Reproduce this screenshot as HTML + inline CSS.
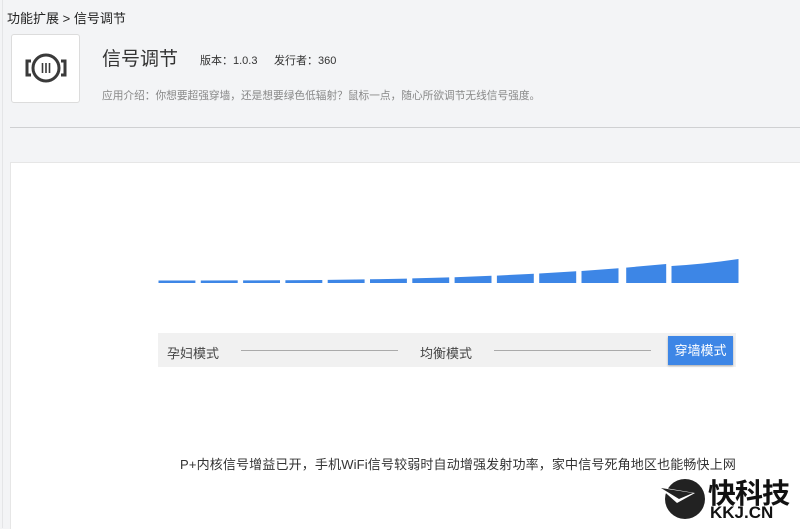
<!DOCTYPE html>
<html><head><meta charset="utf-8"><style>
body{margin:0;width:800px;height:528px;overflow:hidden;background:#f3f4f6;font-family:"Liberation Sans","Noto Sans CJK SC",sans-serif;position:relative;color:#333}
.a{position:absolute;white-space:nowrap}
</style></head><body>
<div class="a" style="left:2px;top:0;width:1px;height:528px;background:#e4e5e7"></div>
<div class="a" style="left:7px;top:8px;font-size:13px;color:#222">功能扩展 &gt; 信号调节</div>
<div class="a" style="left:11px;top:34px;width:67px;height:67px;background:#fff;border:1px solid #dcdcdc;border-radius:3px"></div>
<svg class="a" style="left:24px;top:50px" width="44" height="36" viewBox="0 0 44 36">
<circle cx="22" cy="18" r="13" fill="none" stroke="#3a3a3a" stroke-width="3"/>
<path d="M7 11H3v14h4M37 11h4v14h-4" fill="none" stroke="#3a3a3a" stroke-width="3"/>
<path d="M18.5 13v10M22 13v10M25.5 13v10" stroke="#3a3a3a" stroke-width="1.6"/>
</svg>
<div class="a" style="left:102px;top:44px;font-size:19px;color:#333">信号调节</div>
<div class="a" style="left:200px;top:52px;font-size:11px;color:#333">版本：1.0.3</div>
<div class="a" style="left:274px;top:52px;font-size:11px;color:#333">发行者：360</div>
<div class="a" style="left:102px;top:88px;font-size:10.7px;color:#888">应用介绍：你想要超强穿墙，还是想要绿色低辐射？鼠标一点，随心所欲调节无线信号强度。</div>
<div class="a" style="left:10px;top:127px;width:790px;height:1px;background:#cfd0d2"></div>
<div class="a" style="left:10px;top:162px;width:790px;height:366px;background:#fff;border-top:1px solid #e6e6e6;border-left:1px solid #e6e6e6"></div>
<svg class="a" style="left:0;top:0" width="800" height="300">
<g fill="#3d86e6">
<polygon points="158.5,283 195.4,283 195.4,280.5 158.5,280.5"/>
<polygon points="200.8,283 237.7,283 237.7,280.4 200.8,280.5"/>
<polygon points="243.1,283 280,283 280,280.3 243.1,280.4"/>
<polygon points="285.4,283 322.3,283 322.3,280 285.4,280.2"/>
<polygon points="327.7,283 364.6,283 364.6,279.4 327.7,279.9"/>
<polygon points="370,283 406.9,283 406.9,278.6 370,279.3"/>
<polygon points="412.3,283 449.2,283 449.2,277.4 412.3,278.4"/>
<polygon points="454.6,283 491.5,283 491.5,275.8 454.6,277.2"/>
<polygon points="496.9,283 533.8,283 533.8,273.8 496.9,275.6"/>
<polygon points="539.2,283 576.2,283 576.2,271.3 539.2,273.5"/>
<polygon points="581.5,283 618.5,283 618.5,268.2 581.5,271"/>
<polygon points="626.2,283 666.2,283 666.2,264 626.2,267.6"/>
<path d="M671.5 283H738.5V259Q705 264 671.5 266Z"/>
</g></svg>
<div class="a" style="left:158px;top:333px;width:578px;height:34px;background:#f1f1f1"></div>
<div class="a" style="left:167px;top:343px;font-size:13px;color:#444">孕妇模式</div>
<div class="a" style="left:241px;top:350px;width:157px;height:1px;background:#aaa"></div>
<div class="a" style="left:420px;top:343px;font-size:13px;color:#444">均衡模式</div>
<div class="a" style="left:494px;top:350px;width:157px;height:1px;background:#aaa"></div>
<div class="a" style="left:668px;top:336px;width:65px;height:29px;background:#3d86e6;color:#fff;font-size:13px;line-height:29px;text-align:center;box-shadow:0 1px 2px rgba(0,0,0,.3)">穿墙模式</div>
<div class="a" style="left:180px;top:454px;font-size:13px;letter-spacing:0.15px;color:#333">P+内核信号增益已开，手机WiFi信号较弱时自动增强发射功率，家中信号死角地区也能畅快上网</div>
<svg class="a" style="left:655px;top:473px" width="60" height="50" viewBox="0 0 60 50">
<circle cx="30" cy="26" r="20" fill="#222"/>
<path d="M4 14L40 20L22 30Z" fill="#fff"/><path d="M6 15L38 20L24 26Z" fill="#222"/>
</svg>
<div class="a" style="left:708px;top:472px;font-size:28px;font-weight:bold;color:#111;letter-spacing:-1px">快科技</div>
<div class="a" style="left:710px;top:503px;font-size:17px;font-weight:bold;color:#111">KKJ.CN</div>
</body></html>
